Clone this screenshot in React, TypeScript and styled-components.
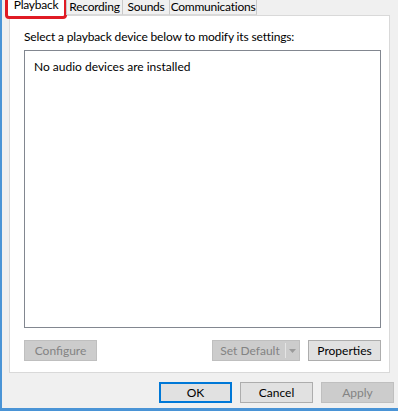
import React from "react";
import styled, { createGlobalStyle } from "styled-components";

const GlobalStyle = createGlobalStyle`
  html, body {
    margin: 0;
    padding: 0;
    background: #f0f0f0;
  }
  body {
    font-family: Lato, "Noto Sans", "Liberation Sans", sans-serif;
    font-size: 12px;
    color: #000;
  }
`;

const Window = styled.div`
  width: 398px;
  height: 411px;
  box-sizing: border-box;
  background: #f0f0f0;
  border-left: 2px solid #4a94d6;
  border-bottom: 3px solid #4a94d6;
  overflow: hidden;
  display: flex;
  flex-direction: column;
`;

const TabStrip = styled.div`
  display: flex;
  align-items: flex-end;
  height: 15px;
  flex-shrink: 0;
  margin-left: 3px;
  position: relative;
  z-index: 1;
`;

const Tab = styled.div<{ $active?: boolean; $width: number }>`
  position: relative;
  box-sizing: border-box;
  width: ${(p) => p.$width}px;
  height: ${(p) => (p.$active ? "22px" : "20px")};
  margin-bottom: ${(p) => (p.$active ? "-1px" : "0")};
  margin-left: ${(p) => (p.$active ? "0" : "-1px")};
  background: ${(p) => (p.$active ? "#fff" : "#f0f0f0")};
  border: 1px solid #c9c9c9;
  border-bottom: ${(p) => (p.$active ? "none" : "1px solid #d9d9d9")};
  display: flex;
  justify-content: center;
  align-items: flex-end;
  padding-bottom: ${(p) => (p.$active ? "5px" : "1px")};
  line-height: 13px;
  letter-spacing: -0.25px;
  white-space: nowrap;
`;

const Highlight = styled.div`
  position: absolute;
  left: -1px;
  right: -1px;
  top: -4px;
  bottom: -3px;
  border: 3px solid #e01b24;
  border-radius: 4px;
  pointer-events: none;
`;

const Panel = styled.div`
  margin: 0 8px 0 7px;
  height: 358px;
  flex-shrink: 0;
  box-sizing: border-box;
  background: #fff;
  border: 1px solid #d9d9d9;
  padding: 14px 10px 0 14px;
  display: flex;
  flex-direction: column;
`;

const Caption = styled.div`
  line-height: 14px;
  height: 14px;
  margin-bottom: 6px;
  letter-spacing: -0.15px;
`;

const DeviceList = styled.div`
  box-sizing: border-box;
  width: 357px;
  height: 278px;
  border: 1px solid #828790;
  padding: 9px 0 0 9px;
  line-height: 14px;
`;

const ButtonRow = styled.div`
  display: flex;
  margin-top: 12px;
  width: 357px;
  gap: 8px;
`;

const Spacer = styled.div`
  flex: 1;
`;

const Button = styled.div<{ $disabled?: boolean; $default?: boolean; $width?: number }>`
  box-sizing: border-box;
  width: ${(p) => p.$width ?? 73}px;
  height: 21px;
  display: flex;
  align-items: center;
  justify-content: center;
  background: ${(p) => (p.$disabled ? "#cccccc" : "#e1e1e1")};
  border: ${(p) =>
    p.$default ? "2px solid #0078d7" : p.$disabled ? "1px solid #bfbfbf" : "1px solid #adadad"};
  color: ${(p) => (p.$disabled ? "#838383" : "#000")};
  white-space: nowrap;
`;

const SplitButton = styled.div`
  box-sizing: border-box;
  width: 88px;
  height: 21px;
  display: flex;
  background: #cccccc;
  border: 1px solid #bfbfbf;
  color: #838383;
  margin-left: -1px;
`;

const SplitMain = styled.div`
  flex: 1;
  display: flex;
  align-items: center;
  justify-content: center;
  padding-left: 2px;
`;

const SplitArrow = styled.div`
  width: 13px;
  display: flex;
  align-items: center;
  justify-content: center;
  border-left: 1px solid #e4e4e4;
  margin: 2px 0;
`;

const Footer = styled.div`
  display: flex;
  justify-content: flex-end;
  gap: 8px;
  padding: 9px 4px 0 0;
`;

export default function App() {
  return (
    <>
      <GlobalStyle />
      <Window>
        <TabStrip>
          <Tab $active $width={62}>
            Playback
            <Highlight />
          </Tab>
          <Tab $width={57}>Recording</Tab>
          <Tab $width={48}>Sounds</Tab>
          <Tab $width={88}>Communications</Tab>
        </TabStrip>
        <Panel>
          <Caption>Select a playback device below to modify its settings:</Caption>
          <DeviceList>No audio devices are installed</DeviceList>
          <ButtonRow>
            <Button $disabled>Configure</Button>
            <Spacer />
            <SplitButton>
              <SplitMain>Set Default</SplitMain>
              <SplitArrow>
                <svg width="7" height="4" viewBox="0 0 7 4">
                  <path d="M0 0 L7 0 L3.5 4 Z" fill="#9a9a9a" />
                </svg>
              </SplitArrow>
            </SplitButton>
            <Button>Properties</Button>
          </ButtonRow>
        </Panel>
        <Footer>
          <Button $default>OK</Button>
          <Button>Cancel</Button>
          <Button $disabled>Apply</Button>
        </Footer>
      </Window>
    </>
  );
}
